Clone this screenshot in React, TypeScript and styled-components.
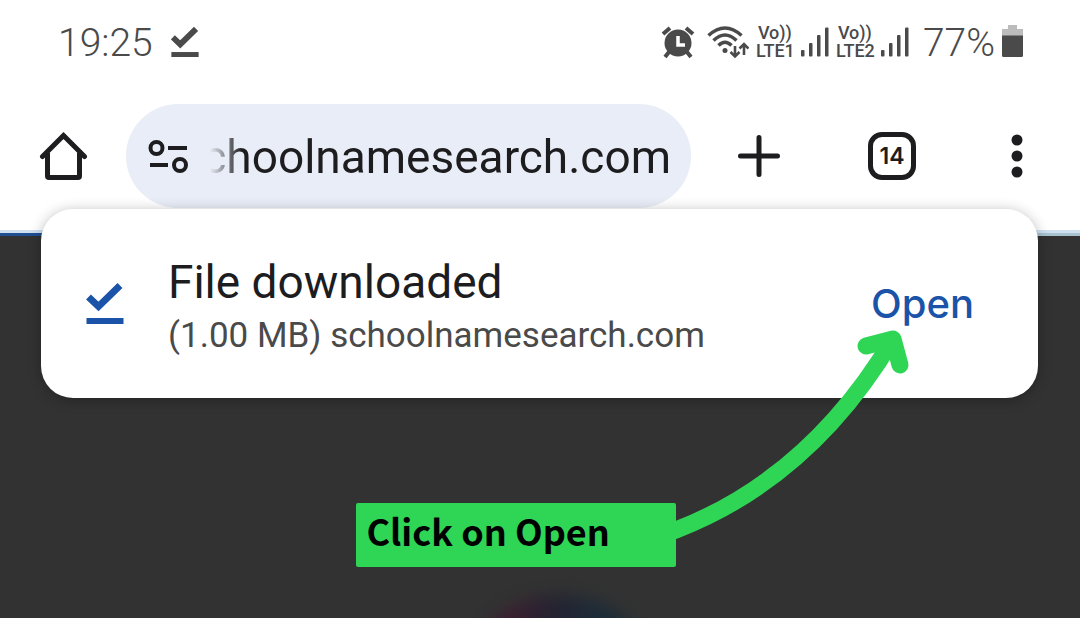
import React from "react";
import styled, { createGlobalStyle } from "styled-components";

const ink = "#1d1d1f";
const statusInk = "#4a4a4a";
const blue = "#1a53a8";
const green = "#2fd656";
const backdrop = "#323232";

const GlobalStyle = createGlobalStyle`
  * { box-sizing: border-box; }
  body {
    margin: 0;
    background: ${backdrop};
    font-family: Roboto, "Liberation Sans", sans-serif;
  }
  button, input { font: inherit; color: inherit; }
`;

const Page = styled.div`
  display: flex;
  flex-direction: column;
  min-height: 100vh;
  overflow: hidden;
  background: ${backdrop};
`;

const Header = styled.header`
  background: #fff;
  padding-bottom: 22px;
`;

const StatusBar = styled.div`
  display: flex;
  align-items: center;
  height: 84px;
  padding: 0 56px 0 58px;
  color: ${statusInk};
`;

const StatusText = styled.span`
  padding-top: 2px;
  font-size: 39px;
  line-height: 48px;
  font-weight: 350;
`;

const StatusGroup = styled.div`
  display: flex;
  align-items: center;
  gap: 7px;
  margin-left: auto;
`;

const StatusItem = styled.div<{ $before?: number }>`
  display: flex;
  margin-left: ${({ $before = 0 }) => $before}px;
`;

const Carrier = styled.div`
  width: 38px;
  font-size: 18px;
  line-height: 18px;
  font-weight: 500;
  text-align: center;
`;

const Toolbar = styled.div`
  display: flex;
  align-items: center;
  margin-top: 20px;
  padding: 0 57px 0 39px;
  color: ${ink};
`;

const IconButton = styled.button<{ $before?: number }>`
  display: flex;
  align-items: center;
  justify-content: center;
  flex: none;
  margin: 0 0 0 ${({ $before = 0 }) => $before}px;
  padding: 0;
  border: 0;
  background: none;
  cursor: pointer;
`;

const TabsButton = styled(IconButton)`
  width: 48px;
  height: 48px;
  border: 5px solid ${ink};
  border-radius: 14px;
  font-family: Inter, sans-serif;
  font-size: 23px;
  line-height: 24px;
  font-weight: 600;
`;

const AddressBar = styled.label`
  display: flex;
  align-items: center;
  flex: 1;
  min-width: 0;
  height: 104px;
  margin-left: 38px;
  padding: 2px 20px 0 22px;
  gap: 12px;
  border-radius: 52px;
  background: #e9edf7;
`;

const Address = styled.input`
  flex: 1;
  min-width: 0;
  padding: 0;
  border: 0;
  outline: 0;
  background: none;
  text-align: right;
  font-size: 46px;
  line-height: 56px;
  mask-image: linear-gradient(to right, transparent 10px, #000 42px);
`;

const Stripe = styled.div`
  height: 6px;
  background: linear-gradient(#cfe0f0 3px, transparent 3px),
    linear-gradient(to right, #1f4f90 45%, #a9c2d2 55%);
`;

const Card = styled.section`
  position: relative;
  z-index: 1;
  display: flex;
  align-items: center;
  height: 189px;
  margin: -27px 42px 0 41px;
  padding: 0 64px 0 45px;
  border-radius: 32px;
  background: #fff;
  box-shadow: 0 2px 14px rgba(0, 0, 0, 0.28);
`;

const CardText = styled.div`
  flex: 1;
  min-width: 0;
  margin-left: 44px;
  padding-top: 10px;
`;

const Title = styled.h1`
  margin: 0;
  color: ${ink};
  font-size: 46px;
  line-height: 54px;
  font-weight: 400;
`;

const Detail = styled.p`
  margin: 0;
  color: ${statusInk};
  font-size: 35px;
  line-height: 54px;
`;

const OpenButton = styled.button`
  padding: 0;
  border: 0;
  background: none;
  color: ${blue};
  font-family: Inter, sans-serif;
  font-size: 40px;
  line-height: 46px;
  font-weight: 500;
  cursor: pointer;
`;

const Stage = styled.main`
  position: relative;
  flex: 1;
  padding: 105px 0 51px 33%;
`;

const Callout = styled.div`
  position: relative;
  z-index: 2;
  width: 320px;
  height: 64px;
  padding: 0 10px;
  border-radius: 2px;
  background: ${green};
  color: #000;
  font-family: "Noto Sans CJK SC", sans-serif;
  font-size: 36px;
  line-height: 54px;
  font-weight: 700;
  white-space: nowrap;
`;

const Arrow = styled.svg`
  position: absolute;
  left: 100%;
  bottom: 28px;
`;

const Glow = styled.div`
  position: absolute;
  top: 197px;
  left: 50%;
  width: 200px;
  height: 200px;
  margin-left: -80px;
  border-radius: 50%;
  background: linear-gradient(to right, #401830 25%, #231f31 45%, #152a3a 70%);
  filter: blur(8px);
  opacity: 0.8;
`;

type DoneIconProps = { size: number; color: string; weight?: number };

const DoneIcon = ({ size, color, weight = 7 }: DoneIconProps) => (
  <svg width={size} height={(size * 42) / 38} viewBox="0 0 38 42" aria-hidden="true">
    <path d="M2.5 14 L12.5 23.5 L34 2.5" fill="none" stroke={color} strokeWidth={weight} />
    <rect x="0.5" y={42 - weight} width="37" height={weight - 1} fill={color} />
  </svg>
);

const AlarmIcon = () => (
  <svg width="34" height="34" viewBox="0 0 34 34" aria-hidden="true">
    <g stroke={statusInk} strokeWidth="4" fill="none">
      <path d="M2 9 L9 3 M25 3 L32 9" />
      <path d="M8 27 L4 32 M26 27 L30 32" />
    </g>
    <circle cx="17" cy="18" r="13.5" fill={statusInk} />
    <path d="M17 11 V20 H24" fill="none" stroke="#fff" strokeWidth="3.5" />
  </svg>
);

const WifiIcon = () => (
  <svg width="42" height="34" viewBox="0 0 42 34" fill="none" stroke={statusInk} aria-hidden="true">
    <g strokeWidth="3.5">
      <path d="M1.5 10.5 Q18 -4.5 34.5 10.5" />
      <path d="M6.5 15.5 Q18 4.5 29.5 15.5" />
      <path d="M11.5 20.5 Q18 14 24.5 20.5" />
    </g>
    <circle cx="18" cy="25.5" r="2.5" fill={statusInk} stroke="none" />
    <g strokeWidth="2.6">
      <path d="M28 21 V31 M23.5 27 L28 31.5 L32.5 27" />
      <path d="M37 30 V20 M32.5 23.5 L37 19 L41.5 23.5" />
    </g>
  </svg>
);

const SignalIcon = () => (
  <svg width="28" height="32" viewBox="0 0 28 32" fill={statusInk} aria-hidden="true">
    <rect x="0" y="24" width="3.5" height="6.5" rx="1" />
    <rect x="8" y="17" width="3.5" height="13.5" rx="1" />
    <rect x="16" y="9" width="3.5" height="21.5" rx="1" />
    <rect x="24" y="1.5" width="3.5" height="29" rx="1" />
  </svg>
);

const BatteryIcon = () => (
  <svg width="22" height="34" viewBox="0 0 22 34" aria-hidden="true">
    <path d="M6 0 H15 V4 H21 V11 H0 V4 H6Z" fill="#bcbcbc" />
    <path d="M0 10.5 H21 V30.5 Q21 32 19.5 32 H1.5 Q0 32 0 30.5Z" fill={statusInk} />
  </svg>
);

const HomeIcon = () => (
  <svg width="49" height="50" viewBox="0 0 49 50" fill="none" stroke={ink} strokeWidth="5" aria-hidden="true">
    <path d="M3.5 25.5 L24.5 4.5 L45.5 25.5" strokeLinecap="round" />
    <path d="M8.5 22 V45 Q8.5 46.5 10 46.5 H39 Q40.5 46.5 40.5 45 V22" />
  </svg>
);

const TuneIcon = () => (
  <svg width="40" height="34" viewBox="0 0 40 34" fill="none" stroke={ink} strokeWidth="4" aria-hidden="true">
    <circle cx="8.5" cy="8" r="6" />
    <path d="M20 8 H39" />
    <circle cx="32" cy="25" r="6" />
    <path d="M2 25 H20" />
  </svg>
);

const PlusIcon = () => (
  <svg width="42" height="42" viewBox="0 0 42 42" stroke={ink} strokeWidth="5" strokeLinecap="round" aria-hidden="true">
    <path d="M21 2.5 V39.5 M2.5 21 H39.5" />
  </svg>
);

const MoreIcon = () => (
  <svg width="12" height="44" viewBox="0 0 12 44" fill={ink} aria-hidden="true">
    <circle cx="6" cy="6" r="5.5" />
    <circle cx="6" cy="22" r="5.5" />
    <circle cx="6" cy="38" r="5.5" />
  </svg>
);

export default function App() {
  return (
    <Page>
      <GlobalStyle />
      <Header>
        <StatusBar>
          <StatusText>19:25</StatusText>
          <StatusItem $before={18}>
            <DoneIcon size={28} color={statusInk} weight={8} />
          </StatusItem>
          <StatusGroup>
            <AlarmIcon />
            <StatusItem $before={5}>
              <WifiIcon />
            </StatusItem>
            <Carrier>
              Vo))
              <br />
              LTE1
            </Carrier>
            <SignalIcon />
            <Carrier>
              Vo))
              <br />
              LTE2
            </Carrier>
            <SignalIcon />
            <StatusItem $before={7}>
              <StatusText>77%</StatusText>
            </StatusItem>
            <BatteryIcon />
          </StatusGroup>
        </StatusBar>
        <Toolbar>
          <IconButton aria-label="Home">
            <HomeIcon />
          </IconButton>
          <AddressBar>
            <TuneIcon />
            <Address aria-label="Address" defaultValue="choolnamesearch.com" />
          </AddressBar>
          <IconButton aria-label="New tab" $before={47}>
            <PlusIcon />
          </IconButton>
          <TabsButton aria-label="Open tabs" $before={88}>
            14
          </TabsButton>
          <IconButton aria-label="More options" $before={95}>
            <MoreIcon />
          </IconButton>
        </Toolbar>
      </Header>
      <Stripe />
      <Card>
        <DoneIcon size={38} color={blue} />
        <CardText>
          <Title>File downloaded</Title>
          <Detail>(1.00 MB) schoolnamesearch.com</Detail>
        </CardText>
        <OpenButton>Open</OpenButton>
      </Card>
      <Stage>
        <Glow />
        <Callout>
          Click on Open
          <Arrow width="240" height="220" viewBox="0 0 240 220" fill="none" stroke={green} strokeWidth="17" aria-hidden="true">
            <path d="M-8 214 L0 211 Q134 159 217 20" />
            <path d="M190 27 L217 20 L224 46" strokeLinecap="round" strokeLinejoin="round" />
          </Arrow>
        </Callout>
      </Stage>
    </Page>
  );
}
